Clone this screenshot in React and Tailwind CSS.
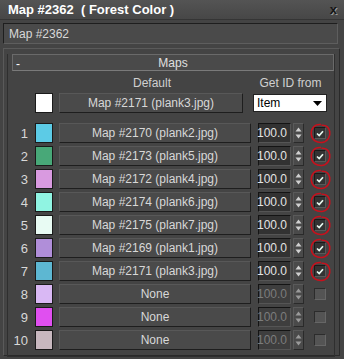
import React from "react";

const rows = [
  { n: 1, c: "#5ccbe6", label: "Map #2170 (plank2.jpg)", on: true },
  { n: 2, c: "#48a878", label: "Map #2173 (plank5.jpg)", on: true },
  { n: 3, c: "#d99ae0", label: "Map #2172 (plank4.jpg)", on: true },
  { n: 4, c: "#90f4e2", label: "Map #2174 (plank6.jpg)", on: true },
  { n: 5, c: "#e8fbf3", label: "Map #2175 (plank7.jpg)", on: true },
  { n: 6, c: "#b08ed9", label: "Map #2169 (plank1.jpg)", on: true },
  { n: 7, c: "#5db7d2", label: "Map #2171 (plank3.jpg)", on: true },
  { n: 8, c: "#d9b8f4", label: "None", on: false },
  { n: 9, c: "#e04ff0", label: "None", on: false },
  { n: 10, c: "#c8b8bf", label: "None", on: false },
];

function Spinner({ dim }) {
  const col = dim ? "#9a9a9a" : "#d0d0d0";
  return (
    <div className="ml-[2px] w-[11px] h-[20px] flex flex-col items-center justify-center gap-[2px] bg-[#4a4a4a] border-t border-l border-[#5a5a5a] border-b border-r border-b-[#2a2a2a] border-r-[#2a2a2a]">
      <svg width="7" height="5" viewBox="0 0 7 5"><path d="M0.5 4.5 L3.5 0.5 L6.5 4.5 Z" fill={col} /></svg>
      <svg width="7" height="5" viewBox="0 0 7 5"><path d="M0.5 0.5 L3.5 4.5 L6.5 0.5 Z" fill={col} /></svg>
    </div>
  );
}

function Check({ on }) {
  if (!on)
    return (
      <div className="ml-[10px] w-[12px] h-[12px] bg-[#545454] border-t border-l border-[#2c2c2c] border-b border-r border-b-[#666] border-r-[#666]" />
    );
  return (
    <div className="relative ml-[10px] w-[12px] h-[12px] bg-[#333333] border-t border-l border-[#1a1a1a] border-b border-r border-b-[#5a5a5a] border-r-[#5a5a5a] flex items-center justify-center">
      <svg width="8" height="7" viewBox="0 0 8 7">
        <path d="M1 3.5 L3.2 5.6 L7 1.2" stroke="#e6f6ee" strokeWidth="1.7" fill="none" />
      </svg>
      <svg className="absolute left-[-6px] top-[-6px]" width="23" height="23" viewBox="0 0 23 23">
        <path d="M12 2.5 C5 1.8 1.8 7 2.3 12.5 C3 18.5 8 21 13 20.5 C19 19.5 21.5 14 20.7 9.5 C20 5.5 17 3 12.5 3.3" stroke="#c8101c" strokeWidth="1.6" fill="none" />
      </svg>
    </div>
  );
}

function Btn({ children, w }) {
  return (
    <div className={`${w} h-[20px] flex items-center justify-center bg-[#4a4a4a] border-t border-l border-[#585858] border-b border-r border-b-[#1e1e1e] border-r-[#1e1e1e] text-[#d8d8d8]`}>
      {children}
    </div>
  );
}

export default function App() {
  return (
    <div
      className="w-[344px] h-[359px] bg-[#444444] overflow-hidden text-[12px] leading-none select-none"
      style={{ fontFamily: "'Liberation Sans', Arial, sans-serif" }}
    >
      {/* title bar */}
      <div className="h-[20px] flex items-center justify-between pl-[8px] pr-[7px] bg-gradient-to-b from-[#545454] to-[#474747] border-b border-[#353535]">
        <span className="font-bold text-white text-[13px] whitespace-pre">Map #2362  ( Forest Color )</span>
        <span className="font-bold text-[#151515] text-[13px] [text-shadow:1px_1px_0_#9a9a9a]">x</span>
      </div>
      {/* name field */}
      <div className="ml-[3px] mt-[3px] w-[335px] h-[21px] flex items-center pl-[5px] bg-[#4a4a4a] border-t border-l border-[#1e1e1e] border-b border-r border-b-[#5e5e5e] border-r-[#5e5e5e] text-[#d8d8d8]">
        Map #2362
      </div>
      {/* scroll panel */}
      <div className="ml-[3px] mt-[4px] w-[337px] h-[308px] border-t border-l border-[#5a5a5a] border-r border-r-[#2a2a2a] border-b border-b-[#2a2a2a]">
        <div className="ml-[3px] mt-[0px] w-[328px] h-[303px] border-l border-r border-b border-[#2f2f2f] relative">
          {/* header */}
          <div className="ml-[4px] mt-[5px] w-[322px] h-[17px] relative flex items-center justify-center bg-[#4a4a4a] border border-[#6a6a6a] border-b-[#7a7a7a] text-[#e0e0e0]">
            <span className="absolute left-[3px] top-[3px] text-white">-</span>
            <span>Maps</span>
          </div>
          {/* labels */}
          <div className="flex items-center h-[14px] mt-[5px] text-[#d0d0d0]">
            <div className="w-[28px]" />
            <div className="ml-[24px] w-[184px] text-center">Default</div>
            <div className="ml-[10px] w-[73px] text-center">Get ID from</div>
          </div>
          {/* default row */}
          <div className="flex items-center h-[20px] mt-[3px]">
            <div className="w-[20px]" />
            <div className="ml-[7px] w-[18px] h-[20px] bg-white border border-[#1a1a1a]" />
            <div className="ml-[6px]">
              <Btn w="w-[184px]">Map #2171 (plank3.jpg)</Btn>
            </div>
            <div className="ml-[10px] w-[74px] h-[18px] bg-white border border-[#222] flex items-center justify-between pl-[3px] pr-[4px] text-black">
              <span>Item</span>
              <svg width="9" height="5" viewBox="0 0 9 5"><path d="M0 0 L9 0 L4.5 5 Z" fill="#000" /></svg>
            </div>
          </div>
          {/* rows */}
          <div className="flex flex-col gap-[3px] mt-[10px]">
            {rows.map((r) => (
              <div key={r.n} className="flex items-center h-[20px]">
                <div className="w-[20px] text-right text-[#d8d8d8] text-[13px]">{r.n}</div>
                <div className="ml-[7px] w-[18px] h-[20px] border border-[#1a1a1a]" style={{ background: r.c }} />
                <div className="ml-[6px]">
                  <Btn w="w-[192px]">{r.label}</Btn>
                </div>
                <div
                  className={`ml-[7px] w-[33px] h-[20px] flex items-center justify-end pr-[3px] border-t border-l border-[#141414] border-b border-r border-b-[#555] border-r-[#555] ${
                    r.on ? "bg-[#323232] text-[#e4e4e4]" : "bg-[#3e3e3e] text-[#7c7c7c]"
                  }`}
                >
                  100.0
                </div>
                <Spinner dim={!r.on} />
                <Check on={r.on} />
              </div>
            ))}
          </div>
        </div>
      </div>
    </div>
  );
}
